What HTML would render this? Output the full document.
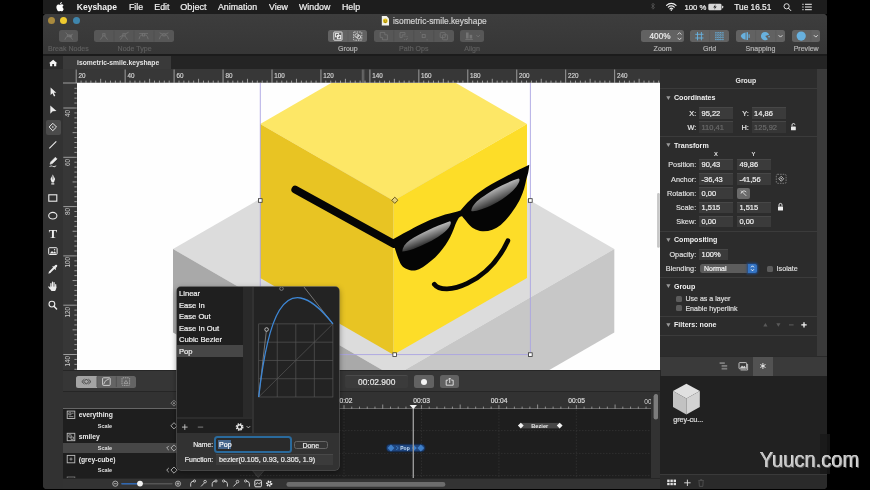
<!DOCTYPE html>
<html lang="en"><head><meta charset="utf-8"><title>Keyshape</title>
<style>
html,body{margin:0;padding:0;background:#000;}
body{width:870px;height:490px;position:relative;will-change:transform;overflow:hidden;font-family:"Liberation Sans",sans-serif;}
body div,body svg{position:absolute;}
.t,.u{white-space:nowrap;}
</style></head><body>

<div style="left:43.2px;top:0.0px;width:783.6px;height:13.6px;background:#1d1d1d;"></div>
<svg style="left:55px;top:0px;" width="11" height="13" viewBox="55 0 11 13"><path fill="#fff" d="M61.9 3.6c.5-.6.8-1.300.7-2.000-.7.100-1.400.500-1.900 1.100-.4.500-.8 1.300-.7 2.000.8 0 1.500-.5 1.900-1.100zM62.600 4.800c-1.000-.100-1.900.600-2.400.600-.500 0-1.300-.600-2.100-.500-1.100 0-2.100.600-2.600 1.600-1.100 1.900-.300 4.800.800 6.400.500.800 1.200 1.600 2.000 1.600.800 0 1.100-.5 2.100-.5s1.200.5 2.100.5 1.400-.8 1.900-1.600c.6-.900.900-1.800.900-1.800s-1.700-.700-1.700-2.600c0-1.700 1.300-2.400 1.400-2.500-.8-1.100-2.000-1.200-2.400-1.200z" transform="translate(60 6.400) scale(.72) translate(-60 -7.7)"/></svg>
<div class="t" style="top:2.03px;font-size:8.5px;line-height:11.1px;color:#f2f2f2;font-weight:bold;left:76.8px;">Keyshape</div>
<div class="t" style="top:2.03px;font-size:8.8px;line-height:11.4px;color:#f2f2f2;-webkit-text-stroke:.2px;left:129.0px;">File</div>
<div class="t" style="top:2.03px;font-size:8.8px;line-height:11.4px;color:#f2f2f2;-webkit-text-stroke:.2px;left:154.3px;">Edit</div>
<div class="t" style="top:2.02px;font-size:9.1px;line-height:11.8px;color:#f2f2f2;-webkit-text-stroke:.2px;left:180.3px;">Object</div>
<div class="t" style="top:2.03px;font-size:8.8px;line-height:11.4px;color:#f2f2f2;-webkit-text-stroke:.2px;left:218.0px;">Animation</div>
<div class="t" style="top:2.03px;font-size:8.8px;line-height:11.4px;color:#f2f2f2;-webkit-text-stroke:.2px;left:269.0px;">View</div>
<div class="t" style="top:2.03px;font-size:8.8px;line-height:11.4px;color:#f2f2f2;-webkit-text-stroke:.2px;left:299.0px;">Window</div>
<div class="t" style="top:2.03px;font-size:8.8px;line-height:11.4px;color:#f2f2f2;-webkit-text-stroke:.2px;left:342.0px;">Help</div>
<div class="t" style="top:3.03px;font-size:7.7px;line-height:10.0px;color:#f2f2f2;-webkit-text-stroke:.2px;left:684.5px;">100 %</div>
<div class="t" style="top:2.02px;font-size:8.3px;line-height:10.8px;color:#f2f2f2;-webkit-text-stroke:.2px;left:734.3px;">Tue 16.51</div>
<svg style="left:645px;top:0px;" width="181" height="14" viewBox="645 0 181 14">
<path d="M651.3 4.600l3.200 3.000-1.600 1.600v-6.000l1.600 1.600-3.200 3.000" fill="none" stroke="#555" stroke-width=".8"/>
<g fill="none" stroke="#f2f2f2" stroke-width="1.150" stroke-linecap="round">
<path d="M666.6 5.300a6.600 6.600 0 0 1 9.400 0"/><path d="M668.3 7.100a4.200 4.200 0 0 1 6.000 0"/><path d="M669.900 8.800a2.000 2.000 0 0 1 2.800 0"/></g>
<circle cx="671.3" cy="10.100" r=".8" fill="#f2f2f2"/>
<rect x="708.300" y="3.800" width="13.200" height="6.400" rx="1.300" fill="#d8d8d8"/><rect x="722.000" y="5.700" width="1.200" height="2.600" rx=".5" fill="#d8d8d8"/>
<path d="M715.600 4.300l-2.400 3.100h1.700l-.7 2.300 2.500-3.200h-1.700z" fill="#222"/>
<circle cx="786.600" cy="6.300" r="2.600" fill="none" stroke="#f2f2f2" stroke-width=".9"/><path d="M788.600 8.300l2.200 2.300" stroke="#f2f2f2" stroke-width="1.000" stroke-linecap="round"/>
<g stroke="#f2f2f2" stroke-width="1.000"><path d="M802.300 4.300h1.300M805.000 4.300h6.800M802.300 7.000h1.300M805.000 7.000h6.800M802.300 9.700h1.300M805.000 9.700h6.800"/></g>
</svg>
<div style="left:43.2px;top:14.3px;width:783.6px;height:474.3px;background:#383838;border-radius:4px 4px 4px 4px;"></div>
<div style="left:43.2px;top:14.3px;width:783.6px;height:39.9px;background:linear-gradient(#3d3d3d,#363636);border-radius:4px 4px 0 0;"></div>
<div style="left:43.2px;top:54.2px;width:783.6px;height:1.5px;background:#1b1b1b;"></div>
<div style="left:47.8px;top:17.2px;width:7.2px;height:7.2px;background:#a98a3e;border-radius:50%;"></div>
<div style="left:60.3px;top:17.2px;width:7.2px;height:7.2px;background:#efca2f;border-radius:50%;"></div>
<div style="left:72.5px;top:17.2px;width:7.2px;height:7.2px;background:#3f86ad;border-radius:50%;"></div>
<svg style="left:381px;top:15px;" width="9" height="12" viewBox="381 15 9 12"><path d="M381.800 16.000h4.800l2.400 2.400v7.100h-7.200z" fill="#f2f2ec"/><circle cx="385.300" cy="20.900" r="2.400" fill="#e8c61f"/><path d="M384.300 20.400v.8M386.300 20.400v.8M384.200 21.900q1.100 1.000 2.200 0" stroke="#3a3000" stroke-width=".6" fill="none"/></svg>
<div class="t" style="top:16.02px;font-size:8.35px;line-height:10.9px;color:#cfcfcf;-webkit-text-stroke:.2px;left:393.0px;">isometric-smile.keyshape</div>
<div style="left:59.0px;top:29.7px;width:19.0px;height:12.8px;background:#575757;border-radius:2.500px;"></div>
<div class="t" style="top:44.03px;font-size:7.05px;line-height:9.2px;color:#5e5e5e;-webkit-text-stroke:.2px;left:-31.6px;width:200px;text-align:center;">Break Nodes</div>
<div style="left:94.0px;top:29.7px;width:80.0px;height:12.8px;background:#575757;border-radius:2.500px;"></div>
<div class="t" style="top:44.03px;font-size:7.05px;line-height:9.2px;color:#5e5e5e;-webkit-text-stroke:.2px;left:34.6px;width:200px;text-align:center;">Node Type</div>
<div style="left:328.3px;top:29.7px;width:39.2px;height:12.8px;background:#626262;border-radius:2.500px;"></div>
<div class="t" style="top:44.03px;font-size:7.05px;line-height:9.2px;color:#b4b4b4;-webkit-text-stroke:.2px;left:247.9px;width:200px;text-align:center;">Group</div>
<div style="left:373.8px;top:29.7px;width:79.9px;height:12.8px;background:#575757;border-radius:2.500px;"></div>
<div class="t" style="top:44.03px;font-size:7.05px;line-height:9.2px;color:#5e5e5e;-webkit-text-stroke:.2px;left:313.8px;width:200px;text-align:center;">Path Ops</div>
<div style="left:460.3px;top:29.7px;width:23.7px;height:12.8px;background:#575757;border-radius:2.500px;"></div>
<div class="t" style="top:44.03px;font-size:7.05px;line-height:9.2px;color:#5e5e5e;-webkit-text-stroke:.2px;left:372.1px;width:200px;text-align:center;">Align</div>
<div style="left:640.7px;top:29.7px;width:43.8px;height:12.8px;background:#626262;border-radius:2.500px;"></div>
<div class="t" style="top:44.03px;font-size:7.05px;line-height:9.2px;color:#b4b4b4;-webkit-text-stroke:.2px;left:562.6px;width:200px;text-align:center;">Zoom</div>
<div style="left:690.0px;top:29.7px;width:39.2px;height:12.8px;background:#626262;border-radius:2.500px;"></div>
<div class="t" style="top:44.03px;font-size:7.05px;line-height:9.2px;color:#b4b4b4;-webkit-text-stroke:.2px;left:609.6px;width:200px;text-align:center;">Grid</div>
<div style="left:735.8px;top:29.7px;width:49.3px;height:12.8px;background:#626262;border-radius:2.500px;"></div>
<div class="t" style="top:44.03px;font-size:7.05px;line-height:9.2px;color:#b4b4b4;-webkit-text-stroke:.2px;left:660.5px;width:200px;text-align:center;">Snapping</div>
<div style="left:791.9px;top:29.7px;width:28.6px;height:12.8px;background:#626262;border-radius:2.500px;"></div>
<div class="t" style="top:44.03px;font-size:7.05px;line-height:9.2px;color:#b4b4b4;-webkit-text-stroke:.2px;left:706.2px;width:200px;text-align:center;">Preview</div>
<div class="t" style="top:32.03px;font-size:8.2px;line-height:10.7px;color:#ececec;-webkit-text-stroke:.2px;right:199.5px;">400%</div>
<svg style="left:43px;top:28px;" width="784" height="16" viewBox="43 28 784 16"><g fill="none" stroke="#747474" stroke-width=".85"><path d="M64.800 39.800q1.000-3.200 3.400-4.000M72.600 39.600q-1.800-2.000-2.400-3.600M68.200 35.800q-.8-2.000-2.600-3.200M70.200 36.000q1.400-1.600 2.600-1.800"/><rect x="67.300" y="34.900" width="1.800" height="1.800"/><rect x="69.600" y="35.100" width="1.800" height="1.800"/></g><g fill="none" stroke="#747474" stroke-width=".85"><path d="M100.3 39.600L103.9 34.800L107.5 39.600"/><rect x="102.8" y="33.700" width="2.200" height="2.200" fill="#575757"/></g><g fill="none" stroke="#747474" stroke-width=".85"><path d="M120.4 39.600L124.0 34.800L127.6 39.600M119.4 37.200L128.6 32.200"/><rect x="122.9" y="33.700" width="2.200" height="2.200" fill="#575757"/></g><g fill="none" stroke="#747474" stroke-width=".85"><path d="M139.0 39.200Q140.4 33.200 143.6 35.600Q146.8 33.200 148.2 39.200M139.2 33.600L148.0 33.600"/><rect x="142.5" y="33.700" width="2.200" height="2.200" fill="#575757"/></g><g fill="none" stroke="#747474" stroke-width=".85"><path d="M159.4 39.200Q160.8 33.200 164.0 35.600Q167.2 33.200 168.6 39.200M159.6 32.800L164.0 35.000L168.4 32.800"/><rect x="162.9" y="33.700" width="2.200" height="2.200" fill="#575757"/></g><path d="M114 30.500v11.200" stroke="#4b4b4b" stroke-width=".6"/><path d="M134 30.500v11.200" stroke="#4b4b4b" stroke-width=".6"/><path d="M154 30.500v11.200" stroke="#4b4b4b" stroke-width=".6"/><g fill="none" stroke="#f0f0f0" stroke-width=".9"><rect x="333.800" y="32.000" width="8.200" height="8.200" rx=".6"/><rect x="335.500" y="33.600" width="3.200" height="3.200"/><rect x="337.400" y="35.500" width="3.200" height="3.200"/></g><g fill="none" stroke="#d8d8d8" stroke-width=".9"><rect x="353.600" y="32.000" width="8.200" height="8.200" rx=".6" stroke-dasharray="1.500 1.000"/><circle cx="356.800" cy="35.600" r="1.900"/><circle cx="358.800" cy="37.000" r="1.900"/></g><path d="M348.000 30.500v11.200" stroke="#585858" stroke-width=".6"/><g fill="none" stroke="#747474" stroke-width=".85"><path d="M380.200 32.400h4.600v2.400h2.600v5.000h-5.000v-2.400h-2.200z"/></g><g fill="none" stroke="#747474" stroke-width=".85"><path d="M400.000 32.600h5.000v2.200h-2.800v2.800h-2.200z"/><path d="M403.600 36.200h3.600v3.400h-3.600" stroke-dasharray="1.000 .8"/></g><g fill="none" stroke="#747474" stroke-width=".85"><rect x="422.200" y="34.600" width="3.000" height="3.000"/><path d="M420.000 32.400h1.000M426.600 39.800h1.000" /></g><g fill="none" stroke="#747474" stroke-width=".85"><rect x="440.200" y="32.600" width="5.000" height="5.000" rx=".6"/><rect x="442.600" y="34.800" width="5.000" height="5.000" rx=".6"/></g><path d="M393.8 30.500v11.200" stroke="#4b4b4b" stroke-width=".6"/><path d="M413.8 30.500v11.200" stroke="#4b4b4b" stroke-width=".6"/><path d="M433.8 30.500v11.200" stroke="#4b4b4b" stroke-width=".6"/><g fill="#747474"><rect x="466.000" y="32.500" width="2.600" height="6.000"/><rect x="469.600" y="34.800" width="2.600" height="3.700"/><rect x="465.300" y="39.200" width="7.600" height=".8"/></g><path d="M476.500 35.200l1.700 1.700 1.700-1.700" fill="none" stroke="#747474" stroke-width=".9"/><path d="M677.600 34.600l1.900-2.000 1.900 2.000M677.600 37.800l1.900 2.000 1.900-2.000" fill="none" stroke="#d0d0d0" stroke-width="1.000"/><g stroke="#68b1df" stroke-width=".9" fill="none"><path d="M697.500 32.000v8.300M701.400 32.000v8.300M695.300 34.300h8.200M695.300 38.000h8.200"/></g><g stroke="#68b1df" stroke-width=".9" fill="none" stroke-dasharray="1.000 .8"><path d="M716.000 32.000v8.500M718.300 32.000v8.500M720.600 32.000v8.500M722.900 32.000v8.500M715.300 33.000h8.500M715.300 35.200h8.500M715.300 37.400h8.500M715.300 39.600h8.500"/></g><path d="M709.600 30.500v11.200" stroke="#585858" stroke-width=".6"/><g fill="#68b1df"><path d="M740.700 36.100q1.000-3.000 4.900-3.600v7.200q-3.900-.6-4.900-3.600z"/><rect x="746.500" y="32.200" width="1.500" height="7.800"/><rect x="748.600" y="34.300" width="1.100" height="3.600"/></g><g fill="#68b1df"><path d="M765.200 36.100L769.150 34.660A4.200 4.200 0 1 0 767.900 39.320z"/><rect x="768.300" y="35.900" width="1.500" height="1.500"/></g><path d="M755.600 30.500v11.200M775.800 30.500v11.200" stroke="#585858" stroke-width=".6"/><path d="M778.600 35.200l1.900 1.900 1.900-1.900" fill="none" stroke="#d8d8d8" stroke-width="1.000"/><circle cx="801.200" cy="36.100" r="4.600" fill="#68b1df"/><path d="M810.800 30.500v11.200" stroke="#585858" stroke-width=".6"/><path d="M813.900 35.200l1.900 1.900 1.900-1.900" fill="none" stroke="#d8d8d8" stroke-width="1.000"/></svg>
<div style="left:43.2px;top:55.7px;width:783.6px;height:13.5px;background:#242424;"></div>
<div style="left:43.2px;top:55.7px;width:19.5px;height:13.5px;background:#2b2b2b;"></div>
<div style="left:63.3px;top:55.7px;width:108.2px;height:13.5px;background:#3a3a3a;"></div>
<svg style="left:48px;top:58px;" width="11" height="10" viewBox="48 58 11 10"><path d="M53.150 59.800l-4.200 3.500h1.100v3.000h2.200v-2.200h1.800v2.200h2.200v-3.000h1.100z" fill="#f4f4f4"/></svg>
<div class="t" style="top:59.02px;font-size:6.75px;line-height:8.8px;color:#e4e4e4;font-weight:bold;left:77.0px;">isometric-smile.keyshape</div>
<div style="left:43.2px;top:69.2px;width:19.8px;height:419.4px;background:#323232;border-radius:0 0 0 4px;"></div>
<div style="left:45.7px;top:119.5px;width:15.2px;height:15.3px;background:#4b4b4b;border-radius:2px;"></div>
<svg style="left:44px;top:84px;" width="19" height="228" viewBox="44 84 19 228">
<path d="M50.600 87.400v7.600l1.900-1.700 1.500 3.100 1.300-.6-1.500-3.000h2.500z" fill="#ececec"/>
<path d="M50.300 105.400V113.700L52.700 111.300L56.500 111.000z" fill="#ececec"/>
<path d="M52.800 123.300l3.700 3.700-3.700 3.700-3.700-3.700z" fill="none" stroke="#ececec" stroke-width="1.000"/><circle cx="52.800" cy="127.000" r=".8" fill="#ececec"/>
<path d="M49.300 148.300l7.000-7.000" stroke="#ececec" stroke-width="1.100"/>
<path d="M50.000 164.300l.700-2.400 4.700-4.700 1.700 1.700-4.700 4.700zM49.300 166.600q2.000-1.600 3.500-.3t3.500-.5" fill="#ececec" stroke="#ececec" stroke-width=".5"/>
<path d="M52.800 174.600l2.300 4.500-1.200 3.300h-2.200l-1.200-3.300zM51.300 183.300h3.000v1.300h-3.000z" fill="#ececec"/><path d="M52.800 175.500v4.000" stroke="#323232" stroke-width=".6"/>
<rect x="48.800" y="194.800" width="8.000" height="6.400" fill="none" stroke="#ececec" stroke-width="1.100"/>
<ellipse cx="52.800" cy="215.700" rx="4.100" ry="3.300" fill="none" stroke="#ececec" stroke-width="1.100"/>
<rect x="48.700" y="247.700" width="8.400" height="6.800" rx=".8" fill="none" stroke="#ececec" stroke-width="1.000"/><path d="M49.700 253.600l2.300-2.700 1.500 1.500 1.300-1.100 1.600 2.300z" fill="#ececec"/><circle cx="54.600" cy="249.800" r=".7" fill="#ececec"/>
<path d="M49.600 272.300l4.300-4.300" stroke="#ececec" stroke-width="1.900" stroke-linecap="round"/><path d="M53.000 266.600l2.400 2.400" stroke="#ececec" stroke-width="1.200" stroke-linecap="round"/><path d="M54.600 267.400l1.500-1.500" stroke="#ececec" stroke-width="2.300" stroke-linecap="round"/><path d="M49.000 273.300l.9-.9" stroke="#ececec" stroke-width=".8" stroke-linecap="round"/>
<g stroke="#ececec" stroke-width="1.200" stroke-linecap="round" fill="none"><path d="M50.900 287.000v-3.300M52.500 286.400v-4.400M54.100 286.600v-3.900M55.700 287.400v-2.700M50.200 288.600l-1.400-1.700"/></g><path d="M50.300 286.500h6.000v1.600q-.2 1.800-1.200 2.800h-3.600q-1.200-1.600-2.600-3.700l1.400.2z" fill="#ececec"/>
<circle cx="51.900" cy="304.100" r="2.900" fill="none" stroke="#ececec" stroke-width="1.100"/><path d="M54.000 306.300l2.600 2.700" stroke="#ececec" stroke-width="1.400" stroke-linecap="round"/>
</svg>
<div class="t" style="top:226.02px;font-size:12.6px;line-height:16.4px;color:#ececec;font-weight:bold;left:-47.1px;width:200px;text-align:center;font-family:'Liberation Serif',serif;">T</div>
<div style="left:63.0px;top:69.2px;width:597.4px;height:14.2px;background:#373737;"></div>
<div style="left:63.0px;top:83.4px;width:13.9px;height:286.8px;background:#373737;"></div>
<svg style="left:63px;top:69px;" width="598" height="302" viewBox="63 69 598 302"><path d="M63.000 83.000h597.400" stroke="#b8b8b8" stroke-width=".8"/><path d="M76.20 69.500v13.500M81.09 80.600v2.400M85.99 80.600v2.400M90.89 80.600v2.400M95.78 80.600v2.400M100.67 78.800v4.200M105.57 80.600v2.400M110.47 80.600v2.400M115.36 80.600v2.400M120.25 80.600v2.400M125.15 69.500v13.500M130.05 80.600v2.400M134.94 80.600v2.400M139.83 80.600v2.400M144.73 80.600v2.400M149.62 78.800v4.200M154.52 80.600v2.400M159.41 80.600v2.400M164.31 80.600v2.400M169.20 80.600v2.400M174.10 69.500v13.500M179.00 80.600v2.400M183.89 80.600v2.400M188.78 80.600v2.400M193.68 80.600v2.400M198.57 78.800v4.200M203.47 80.600v2.400M208.37 80.600v2.400M213.26 80.600v2.400M218.15 80.600v2.400M223.05 69.500v13.500M227.94 80.600v2.400M232.84 80.600v2.400M237.74 80.600v2.400M242.63 80.600v2.400M247.52 78.800v4.200M252.42 80.600v2.400M257.31 80.600v2.400M262.21 80.600v2.400M267.10 80.600v2.400M272.00 69.500v13.500M276.89 80.600v2.400M281.79 80.600v2.400M286.69 80.600v2.400M291.58 80.600v2.400M296.47 78.800v4.200M301.37 80.600v2.400M306.26 80.600v2.400M311.16 80.600v2.400M316.06 80.600v2.400M320.95 69.500v13.500M325.84 80.600v2.400M330.74 80.600v2.400M335.63 80.600v2.400M340.53 80.600v2.400M345.42 78.800v4.200M350.32 80.600v2.400M355.21 80.600v2.400M360.11 80.600v2.400M365.00 80.600v2.400M369.90 69.500v13.500M374.79 80.600v2.400M379.69 80.600v2.400M384.58 80.600v2.400M389.48 80.600v2.400M394.37 78.800v4.200M399.27 80.600v2.400M404.16 80.600v2.400M409.06 80.600v2.400M413.95 80.600v2.400M418.85 69.500v13.500M423.74 80.600v2.400M428.64 80.600v2.400M433.53 80.600v2.400M438.43 80.600v2.400M443.32 78.800v4.200M448.22 80.600v2.400M453.11 80.600v2.400M458.01 80.600v2.400M462.90 80.600v2.400M467.80 69.500v13.500M472.69 80.600v2.400M477.59 80.600v2.400M482.48 80.600v2.400M487.38 80.600v2.400M492.27 78.800v4.200M497.17 80.600v2.400M502.06 80.600v2.400M506.96 80.600v2.400M511.85 80.600v2.400M516.75 69.500v13.500M521.64 80.600v2.400M526.54 80.600v2.400M531.43 80.600v2.400M536.33 80.600v2.400M541.23 78.800v4.200M546.12 80.600v2.400M551.01 80.600v2.400M555.91 80.600v2.400M560.80 80.600v2.400M565.70 69.500v13.500M570.60 80.600v2.400M575.49 80.600v2.400M580.38 80.600v2.400M585.28 80.600v2.400M590.17 78.800v4.200M595.07 80.600v2.400M599.97 80.600v2.400M604.86 80.600v2.400M609.75 80.600v2.400M614.65 69.500v13.500M619.54 80.600v2.400M624.44 80.600v2.400M629.34 80.600v2.400M634.23 80.600v2.400M639.12 78.800v4.200M644.02 80.600v2.400M648.91 80.600v2.400M653.81 80.600v2.400M658.71 80.600v2.400" stroke="#b8b8b8" stroke-width=".8" fill="none"/><path d="M362.300 69.500v13.500M363.800 69.500v13.500" stroke="#8a8a8a" stroke-width=".7"/><path d="M74.400 88.28h2.400M74.400 93.21h2.400M74.400 98.14h2.400M74.400 103.07h2.400M63.300 108.00h13.500M74.400 112.93h2.400M74.400 117.86h2.400M74.400 122.79h2.400M74.400 127.72h2.400M72.600 132.65h4.200M74.400 137.58h2.400M74.400 142.51h2.400M74.400 147.44h2.400M74.400 152.37h2.400M63.300 157.30h13.500M74.400 162.23h2.400M74.400 167.16h2.400M74.400 172.09h2.400M74.400 177.02h2.400M72.600 181.95h4.200M74.400 186.88h2.400M74.400 191.81h2.400M74.400 196.74h2.400M74.400 201.67h2.400M63.300 206.60h13.500M74.400 211.53h2.400M74.400 216.46h2.400M74.400 221.39h2.400M74.400 226.32h2.400M72.600 231.25h4.200M74.400 236.18h2.400M74.400 241.11h2.400M74.400 246.04h2.400M74.400 250.97h2.400M63.300 255.90h13.500M74.400 260.83h2.400M74.400 265.76h2.400M74.400 270.69h2.400M74.400 275.62h2.400M72.600 280.55h4.200M74.400 285.48h2.400M74.400 290.41h2.400M74.400 295.34h2.400M74.400 300.27h2.400M63.300 305.20h13.500M74.400 310.13h2.400M74.400 315.06h2.400M74.400 319.99h2.400M74.400 324.92h2.400M72.600 329.85h4.200M74.400 334.78h2.400M74.400 339.71h2.400M74.400 344.64h2.400M74.400 349.57h2.400M63.300 354.50h13.500M74.400 359.43h2.400M74.400 364.36h2.400M74.400 369.29h2.400" stroke="#b8b8b8" stroke-width=".8" fill="none"/></svg>
<div class="t" style="top:72.03px;font-size:6.3px;line-height:8.2px;color:#cfcfcf;-webkit-text-stroke:.2px;left:78.5px;">20</div>
<div class="t" style="top:72.03px;font-size:6.3px;line-height:8.2px;color:#cfcfcf;-webkit-text-stroke:.2px;left:127.5px;">40</div>
<div class="t" style="top:72.03px;font-size:6.3px;line-height:8.2px;color:#cfcfcf;-webkit-text-stroke:.2px;left:176.4px;">60</div>
<div class="t" style="top:72.03px;font-size:6.3px;line-height:8.2px;color:#cfcfcf;-webkit-text-stroke:.2px;left:225.4px;">80</div>
<div class="t" style="top:72.03px;font-size:6.3px;line-height:8.2px;color:#cfcfcf;-webkit-text-stroke:.2px;left:274.3px;">100</div>
<div class="t" style="top:72.03px;font-size:6.3px;line-height:8.2px;color:#cfcfcf;-webkit-text-stroke:.2px;left:323.2px;">120</div>
<div class="t" style="top:72.03px;font-size:6.3px;line-height:8.2px;color:#cfcfcf;-webkit-text-stroke:.2px;left:372.2px;">140</div>
<div class="t" style="top:72.03px;font-size:6.3px;line-height:8.2px;color:#cfcfcf;-webkit-text-stroke:.2px;left:421.1px;">160</div>
<div class="t" style="top:72.03px;font-size:6.3px;line-height:8.2px;color:#cfcfcf;-webkit-text-stroke:.2px;left:470.1px;">180</div>
<div class="t" style="top:72.03px;font-size:6.3px;line-height:8.2px;color:#cfcfcf;-webkit-text-stroke:.2px;left:519.0px;">200</div>
<div class="t" style="top:72.03px;font-size:6.3px;line-height:8.2px;color:#cfcfcf;-webkit-text-stroke:.2px;left:568.0px;">220</div>
<div class="t" style="top:72.03px;font-size:6.3px;line-height:8.2px;color:#cfcfcf;-webkit-text-stroke:.2px;left:616.9px;">240</div>
<div class="u" style="left:64.000px;top:109.5px;width:8px;height:14px;font-size:6.300px;color:#cfcfcf;"><div class="u" style="left:0;top:0;transform-origin:0 0;transform:rotate(-90deg) translate(-100%,0);line-height:8px;">40</div></div>
<div class="u" style="left:64.000px;top:158.8px;width:8px;height:14px;font-size:6.300px;color:#cfcfcf;"><div class="u" style="left:0;top:0;transform-origin:0 0;transform:rotate(-90deg) translate(-100%,0);line-height:8px;">60</div></div>
<div class="u" style="left:64.000px;top:208.1px;width:8px;height:14px;font-size:6.300px;color:#cfcfcf;"><div class="u" style="left:0;top:0;transform-origin:0 0;transform:rotate(-90deg) translate(-100%,0);line-height:8px;">80</div></div>
<div class="u" style="left:64.000px;top:257.4px;width:8px;height:14px;font-size:6.300px;color:#cfcfcf;"><div class="u" style="left:0;top:0;transform-origin:0 0;transform:rotate(-90deg) translate(-100%,0);line-height:8px;">100</div></div>
<div class="u" style="left:64.000px;top:306.7px;width:8px;height:14px;font-size:6.300px;color:#cfcfcf;"><div class="u" style="left:0;top:0;transform-origin:0 0;transform:rotate(-90deg) translate(-100%,0);line-height:8px;">120</div></div>
<div class="u" style="left:64.000px;top:356.0px;width:8px;height:14px;font-size:6.300px;color:#cfcfcf;"><div class="u" style="left:0;top:0;transform-origin:0 0;transform:rotate(-90deg) translate(-100%,0);line-height:8px;">140</div></div>
<svg style="left:77px;top:83px" width="583.4" height="287.2" viewBox="77 83 583.4 287.2">
<defs>
<linearGradient id="gl1" gradientUnits="userSpaceOnUse" x1="424" y1="231" x2="430" y2="247"><stop offset="0" stop-color="#fff" stop-opacity=".72"/><stop offset="1" stop-color="#fff" stop-opacity="0"/></linearGradient>
<linearGradient id="gl2" gradientUnits="userSpaceOnUse" x1="493" y1="189" x2="501" y2="207"><stop offset="0" stop-color="#fff" stop-opacity=".72"/><stop offset="1" stop-color="#fff" stop-opacity="0"/></linearGradient>
</defs>
<rect x="70" y="80" width="600" height="300" fill="#fefefe"/>
<path d="M173 249L393.500 122L614.300 249L393.500 376.500z" fill="#dcdcdc"/>
<path d="M173 249L393.500 376.500V460H173z" fill="#a9a9a9"/>
<path d="M173 332.500L393.500 460H173z" fill="#fefefe"/>
<path d="M393.500 376.500L614.300 249V332.500L393.500 460z" fill="#c7c7c7"/>
<path d="M260.200 124L393.500 47L527 124L393.500 200.800z" fill="#fde766"/>
<path d="M260.200 124L393.500 200.800V354.800L260.200 278z" fill="#e8c423"/>
<path d="M393.500 200.800L527 124V278L393.500 354.800z" fill="#fddd28"/>
<path d="M295.300 189.700L394 244" stroke="#050505" stroke-width="7.800" stroke-linecap="round"/>
<path d="M390.700 240.500C398 236.500 408 231 416.800 226.300C424 222.500 430 220 435.100 218C442 215.300 449 213.500 453.500 212.500C456.500 211.800 458.500 211.300 460.500 210.600C466 204 474 195 486 187.500C498 180.500 515 171.500 529.300 164.800C528.800 171 527.800 175 526.400 178.900C525 186 523.500 191.500 520.900 197.300C518.800 202 516.500 206 513.500 210.100C510 215.500 505.500 220.500 500.700 224.900C495 229.500 488.500 231.700 482.300 231.300C476 230.500 471 227.500 467.600 223C465.500 220.500 463.500 218 462.100 216.300C460.800 216 459.300 217 458.100 218.900C457 221 456.200 222.500 455.400 224.400C453.500 230 451 236 448 241C444.500 247 440 252.500 435.100 257.500C430 262 424.500 266.500 419 269.300C416 270.600 413.500 270.900 411.300 270.400C408.500 270 406 269 403.900 267.600C402 266 401 264.500 400.200 263C397.500 257 395.500 251 393.800 244.600z" fill="#050505"/>
<path d="M402.300 251.500C402.500 247.500 405 243.500 410 240C420 233.500 436 226 449.900 221.200C451.500 221.500 451 224.500 448.500 228C445 232.500 438 237.500 428 242.500C418 247.500 408 251.500 402.300 251.500z" fill="url(#gl1)"/>
<path d="M471.300 211C471.500 207 475 202.500 481 198C491 190.500 506 182.500 518.500 178.500C520.500 179 519.500 182.500 516.500 186.500C512 192.500 503 199.500 493 204.500C484 209 475 212 471.300 211z" fill="url(#gl2)"/>
<path d="M434.300 284.300C444 297 488 284 507.900 240.700" fill="none" stroke="#050505" stroke-width="4.700" stroke-linecap="round"/>
<g stroke="#aaa4e2" stroke-width=".9" fill="none"><path d="M260.300 83V354.600H530.400V83"/></g>
<g fill="#fff" stroke="#333" stroke-width=".8">
<rect x="258.500" y="198.700" width="3.600" height="3.600"/><rect x="528.600" y="198.700" width="3.600" height="3.600"/>
<rect x="392.900" y="352.800" width="3.600" height="3.600"/><rect x="528.600" y="352.800" width="3.600" height="3.600"/>
</g>
<path d="M394.800 197.200l3.100 3.100-3.100 3.100-3.100-3.100z" fill="#e6d27a" stroke="#5a4a10" stroke-width=".9"/>
<rect x="657.100" y="193" width="2.700" height="54.700" rx="1.300" fill="#c6c6c6"/>
</svg>
<div style="left:660.2px;top:69.2px;width:0.6px;height:14.2px;background:#444;"></div>
<div style="left:660.4px;top:69.2px;width:166.4px;height:307.8px;background:#3a3a3a;"></div>
<div style="left:660.4px;top:69.2px;width:156.8px;height:287.1px;background:#2c2c2c;"></div>
<div style="left:660.4px;top:88.1px;width:156.8px;height:1.0px;background:#3b3b3b;"></div>
<div style="left:660.4px;top:136.0px;width:156.8px;height:1.0px;background:#3b3b3b;"></div>
<div style="left:660.4px;top:231.1px;width:156.8px;height:1.0px;background:#3b3b3b;"></div>
<div style="left:660.4px;top:277.3px;width:156.8px;height:1.0px;background:#3b3b3b;"></div>
<div style="left:660.4px;top:315.7px;width:156.8px;height:1.0px;background:#3b3b3b;"></div>
<div style="left:660.4px;top:334.8px;width:156.8px;height:1.0px;background:#3b3b3b;"></div>
<div class="t" style="top:76.02px;font-size:6.9px;line-height:9.0px;color:#e6e6e6;font-weight:bold;left:645.9px;width:200px;text-align:center;">Group</div>
<svg style="left:665px;top:93.5px" width="7" height="8" viewBox="0 0 7 8"><path d="M1.300 2.300h4.200l-2.100 3.600z" fill="#9a9a9a"/></svg>
<div class="t" style="top:94.03px;font-size:7.1px;line-height:9.2px;color:#f0f0f0;font-weight:bold;left:674.0px;">Coordinates</div>
<div class="t" style="top:109.03px;font-size:7.3px;line-height:9.5px;color:#e8e8e8;-webkit-text-stroke:.2px;right:173.8px;">X:</div>
<div style="left:698.9px;top:107.1px;width:33.9px;height:11.6px;background:#3b3b3b;border-top:.6px solid #474747;box-sizing:border-box;"></div>
<div class="t" style="top:109.03px;font-size:7.5px;line-height:9.8px;color:#f0f0f0;-webkit-text-stroke:.2px;left:701.5px;">95,22</div>
<div class="t" style="top:109.03px;font-size:7.3px;line-height:9.5px;color:#e8e8e8;-webkit-text-stroke:.2px;right:121.2px;">Y:</div>
<div style="left:751.5px;top:107.1px;width:34.5px;height:11.6px;background:#3b3b3b;border-top:.6px solid #474747;box-sizing:border-box;"></div>
<div class="t" style="top:109.03px;font-size:7.5px;line-height:9.8px;color:#f0f0f0;-webkit-text-stroke:.2px;left:754.1px;">14,86</div>
<div class="t" style="top:123.02px;font-size:7.3px;line-height:9.5px;color:#e8e8e8;-webkit-text-stroke:.2px;right:173.8px;">W:</div>
<div style="left:698.9px;top:121.2px;width:33.9px;height:11.6px;background:#363636;border-top:.6px solid #474747;box-sizing:border-box;"></div>
<div class="t" style="top:123.02px;font-size:7.5px;line-height:9.8px;color:#6a6a6a;-webkit-text-stroke:.2px;left:701.5px;">110,41</div>
<div class="t" style="top:123.02px;font-size:7.3px;line-height:9.5px;color:#e8e8e8;-webkit-text-stroke:.2px;right:121.2px;">H:</div>
<div style="left:751.5px;top:121.2px;width:34.5px;height:11.6px;background:#363636;border-top:.6px solid #474747;box-sizing:border-box;"></div>
<div class="t" style="top:123.02px;font-size:7.5px;line-height:9.8px;color:#6a6a6a;-webkit-text-stroke:.2px;left:754.1px;">125,92</div>
<svg style="left:789px;top:121px;" width="9" height="12" viewBox="789 121 9 12"><rect x="791.000" y="126.400" width="4.800" height="3.900" rx=".6" fill="#e8e8e8"/><path d="M792.000 126.400v-1.300a1.450 1.450 0 0 1 2.900-.3" fill="none" stroke="#e8e8e8" stroke-width=".9"/></svg>
<svg style="left:665px;top:141.3px" width="7" height="8" viewBox="0 0 7 8"><path d="M1.300 2.300h4.200l-2.100 3.600z" fill="#9a9a9a"/></svg>
<div class="t" style="top:142.03px;font-size:7.1px;line-height:9.2px;color:#f0f0f0;font-weight:bold;left:674.0px;">Transform</div>
<div class="t" style="top:151.02px;font-size:5.8px;line-height:7.5px;color:#e0e0e0;font-weight:bold;left:616.0px;width:200px;text-align:center;">X</div>
<div class="t" style="top:151.02px;font-size:5.8px;line-height:7.5px;color:#e0e0e0;font-weight:bold;left:653.5px;width:200px;text-align:center;">Y</div>
<div class="t" style="top:160.03px;font-size:7.3px;line-height:9.5px;color:#dedede;-webkit-text-stroke:.2px;right:173.8px;">Position:</div>
<div style="left:698.9px;top:158.8px;width:33.9px;height:11.6px;background:#3b3b3b;border-top:.6px solid #474747;box-sizing:border-box;"></div>
<div class="t" style="top:160.03px;font-size:7.5px;line-height:9.8px;color:#f0f0f0;-webkit-text-stroke:.2px;left:701.5px;">90,43</div>
<div style="left:736.8px;top:158.8px;width:34.2px;height:11.6px;background:#3b3b3b;border-top:.6px solid #474747;box-sizing:border-box;"></div>
<div class="t" style="top:160.03px;font-size:7.5px;line-height:9.8px;color:#f0f0f0;-webkit-text-stroke:.2px;left:739.4px;">49,86</div>
<div class="t" style="top:175.02px;font-size:7.3px;line-height:9.5px;color:#dedede;-webkit-text-stroke:.2px;right:173.8px;">Anchor:</div>
<div style="left:698.9px;top:173.2px;width:33.9px;height:11.6px;background:#3b3b3b;border-top:.6px solid #474747;box-sizing:border-box;"></div>
<div class="t" style="top:175.02px;font-size:7.5px;line-height:9.8px;color:#f0f0f0;-webkit-text-stroke:.2px;left:701.5px;">-36,43</div>
<div style="left:736.8px;top:173.2px;width:34.2px;height:11.6px;background:#3b3b3b;border-top:.6px solid #474747;box-sizing:border-box;"></div>
<div class="t" style="top:175.02px;font-size:7.5px;line-height:9.8px;color:#f0f0f0;-webkit-text-stroke:.2px;left:739.4px;">-41,56</div>
<div class="t" style="top:189.03px;font-size:7.3px;line-height:9.5px;color:#dedede;-webkit-text-stroke:.2px;right:173.8px;">Rotation:</div>
<div style="left:698.9px;top:187.3px;width:33.9px;height:11.6px;background:#3b3b3b;border-top:.6px solid #474747;box-sizing:border-box;"></div>
<div class="t" style="top:189.03px;font-size:7.5px;line-height:9.8px;color:#f0f0f0;-webkit-text-stroke:.2px;left:701.5px;">0,00</div>
<div class="t" style="top:203.02px;font-size:7.3px;line-height:9.5px;color:#dedede;-webkit-text-stroke:.2px;right:173.8px;">Scale:</div>
<div style="left:698.9px;top:201.5px;width:33.9px;height:11.6px;background:#3b3b3b;border-top:.6px solid #474747;box-sizing:border-box;"></div>
<div class="t" style="top:203.03px;font-size:7.5px;line-height:9.8px;color:#f0f0f0;-webkit-text-stroke:.2px;left:701.5px;">1,515</div>
<div style="left:736.8px;top:201.5px;width:34.2px;height:11.6px;background:#3b3b3b;border-top:.6px solid #474747;box-sizing:border-box;"></div>
<div class="t" style="top:203.03px;font-size:7.5px;line-height:9.8px;color:#f0f0f0;-webkit-text-stroke:.2px;left:739.4px;">1,515</div>
<div class="t" style="top:217.03px;font-size:7.3px;line-height:9.5px;color:#dedede;-webkit-text-stroke:.2px;right:173.8px;">Skew:</div>
<div style="left:698.9px;top:215.6px;width:33.9px;height:11.6px;background:#3b3b3b;border-top:.6px solid #474747;box-sizing:border-box;"></div>
<div class="t" style="top:217.03px;font-size:7.5px;line-height:9.8px;color:#f0f0f0;-webkit-text-stroke:.2px;left:701.5px;">0,00</div>
<div style="left:736.8px;top:215.6px;width:34.2px;height:11.6px;background:#3b3b3b;border-top:.6px solid #474747;box-sizing:border-box;"></div>
<div class="t" style="top:217.03px;font-size:7.5px;line-height:9.8px;color:#f0f0f0;-webkit-text-stroke:.2px;left:739.4px;">0,00</div>
<svg style="left:775px;top:173px;" width="13" height="12" viewBox="775 173 13 12"><rect x="776.300" y="174.300" width="9.800" height="9.000" rx="1.200" fill="none" stroke="#8a8a8a" stroke-width=".8" stroke-dasharray="1.600 1.000"/><path d="M781.200 176.300l2.500 2.500-2.500 2.500-2.500-2.500z" fill="none" stroke="#ddd" stroke-width=".8"/><circle cx="781.200" cy="178.800" r=".7" fill="#ddd"/></svg>
<div style="left:737.2px;top:187.6px;width:13.0px;height:11.0px;background:#6a6a6a;border-radius:2px;"></div>
<svg style="left:738px;top:188px;" width="12" height="10" viewBox="738 188 12 10"><path d="M741.000 190.600l5.200 5.200M741.000 193.600a3.000 3.000 0 0 1 5.300-1.600" stroke="#e0e0e0" stroke-width=".9" fill="none"/></svg>
<svg style="left:776px;top:201px;" width="10" height="12" viewBox="776 201 10 12"><rect x="778.000" y="206.400" width="5.000" height="4.200" rx=".6" fill="#f0f0f0"/><path d="M779.000 206.400v-1.500a1.500 1.500 0 0 1 3.000 0v1.500" fill="none" stroke="#f0f0f0" stroke-width=".9"/></svg>
<svg style="left:665px;top:235.7px" width="7" height="8" viewBox="0 0 7 8"><path d="M1.300 2.300h4.200l-2.100 3.600z" fill="#9a9a9a"/></svg>
<div class="t" style="top:236.03px;font-size:7.1px;line-height:9.2px;color:#f0f0f0;font-weight:bold;left:674.0px;">Compositing</div>
<div class="t" style="top:250.03px;font-size:7.3px;line-height:9.5px;color:#dedede;-webkit-text-stroke:.2px;right:173.8px;">Opacity:</div>
<div style="left:698.9px;top:248.6px;width:29.1px;height:11.6px;background:#3b3b3b;border-top:.6px solid #474747;box-sizing:border-box;"></div>
<div class="t" style="top:250.03px;font-size:7.5px;line-height:9.8px;color:#f0f0f0;-webkit-text-stroke:.2px;left:701.5px;">100%</div>
<div class="t" style="top:264.03px;font-size:7.3px;line-height:9.5px;color:#dedede;-webkit-text-stroke:.2px;right:173.8px;">Blending:</div>
<div style="left:699.6px;top:263.7px;width:57.2px;height:9.2px;background:#5c5c5c;border-radius:2.500px;"></div>
<div style="left:748.2px;top:263.7px;width:8.6px;height:9.2px;background:#3474c4;border-radius:0 2.500px 2.500px 0;box-shadow:0 0 2px 1.200px rgba(30,75,140,.85);"></div>
<svg style="left:748px;top:263px;" width="9" height="11" viewBox="748 263 9 11"><path d="M751.100 267.300l1.400-1.500 1.400 1.500M751.100 269.300l1.400 1.500 1.400-1.500" fill="none" stroke="#fff" stroke-width=".9"/></svg>
<div class="t" style="top:264.02px;font-size:7.0px;line-height:9.1px;color:#f4f4f4;-webkit-text-stroke:.2px;left:704.0px;">Normal</div>
<div style="left:766.6px;top:265.5px;width:6.0px;height:6.0px;background:#5c5c5c;border-radius:1.500px;"></div>
<div class="t" style="top:264.03px;font-size:7.2px;line-height:9.4px;color:#dedede;-webkit-text-stroke:.2px;left:776.6px;">Isolate</div>
<svg style="left:665px;top:282.0px" width="7" height="8" viewBox="0 0 7 8"><path d="M1.300 2.300h4.200l-2.100 3.600z" fill="#9a9a9a"/></svg>
<div class="t" style="top:283.03px;font-size:7.1px;line-height:9.2px;color:#f0f0f0;font-weight:bold;left:674.0px;">Group</div>
<div style="left:675.6px;top:295.5px;width:6.0px;height:6.0px;background:#5c5c5c;border-radius:1.500px;"></div>
<div class="t" style="top:294.03px;font-size:7.05px;line-height:9.2px;color:#dedede;-webkit-text-stroke:.2px;left:685.4px;">Use as a layer</div>
<div style="left:675.6px;top:305.1px;width:6.0px;height:6.0px;background:#5c5c5c;border-radius:1.500px;"></div>
<div class="t" style="top:304.02px;font-size:7.05px;line-height:9.2px;color:#dedede;-webkit-text-stroke:.2px;left:685.4px;">Enable hyperlink</div>
<svg style="left:665px;top:320.8px" width="7" height="8" viewBox="0 0 7 8"><path d="M1.300 2.300h4.200l-2.100 3.600z" fill="#9a9a9a"/></svg>
<div class="t" style="top:321.03px;font-size:7.1px;line-height:9.2px;color:#f0f0f0;font-weight:bold;left:674.0px;">Filters: none</div>
<svg style="left:760px;top:320px;" width="50" height="10" viewBox="760 320 50 10"><path d="M763.300 326.500h4.200l-2.100-3.400z" fill="#5a5a5a"/><path d="M776.300 323.300h4.200l-2.100 3.400z" fill="#5a5a5a"/><path d="M789.000 324.900h4.600" stroke="#5a5a5a" stroke-width="1.100"/><path d="M801.300 324.900h5.400M804.000 322.200v5.400" stroke="#f4f4f4" stroke-width="1.300"/></svg>
<div style="left:660.4px;top:356.3px;width:166.4px;height:19.9px;background:#3a3a3a;"></div>
<div style="left:660.4px;top:355.9px;width:166.4px;height:1.4px;background:#2a2a2a;"></div>
<div style="left:660.0px;top:370.2px;width:0.8px;height:108.3px;background:#262626;"></div>
<div style="left:753.3px;top:357.3px;width:20.0px;height:18.9px;background:#525252;"></div>
<svg style="left:715px;top:359px;" width="57" height="14" viewBox="715 359 57 14"><g fill="#7d7d7d"><rect x="719.600" y="362.200" width="5.200" height="1.800"/><rect x="721.600" y="365.000" width="5.600" height="1.800"/><rect x="721.600" y="367.800" width="5.600" height="1.800"/></g>
<rect x="739.000" y="362.600" width="7.600" height="6.200" rx=".8" fill="none" stroke="#cfcfcf" stroke-width=".9"/><path d="M740.000 368.000l2.000-2.500 1.400 1.300 1.200-1.000 1.400 2.200z" fill="#cfcfcf"/><path d="M747.600 364.000v6.000h-7.000" fill="none" stroke="#cfcfcf" stroke-width=".8"/>
<g stroke="#f0f0f0" stroke-width=".9"><path d="M762.900 363.000v6.000M760.300 364.500l5.200 3.000M760.300 367.500l5.200-3.000"/></g></svg>
<div style="left:660.4px;top:376.2px;width:166.4px;height:98.0px;background:#212121;"></div>
<div style="left:660.4px;top:474.0px;width:166.4px;height:14.6px;background:#2a2a2a;border-radius:0 0 4px 0;border-top:.7px solid #3a3a3a;box-sizing:border-box;"></div>
<svg style="left:672px;top:382px;" width="30" height="34" viewBox="672 382 30 34"><path d="M686.400 383.800l13.400 7.200-13.400 7.400-13.400-7.400z" fill="#e0e0e0"/><path d="M673.000 391.000l13.400 7.400v16.200l-13.400-7.600z" fill="#c2c2c2"/><path d="M699.800 391.000l-13.400 7.400v16.200l13.400-7.600z" fill="#d3d3d3"/></svg>
<div class="t" style="top:415.03px;font-size:7.2px;line-height:9.4px;color:#e0e0e0;-webkit-text-stroke:.2px;left:588.2px;width:200px;text-align:center;">grey-cu...</div>
<svg style="left:666px;top:478px;" width="42" height="10" viewBox="666 478 42 10"><g fill="#e0e0e0"><rect x="667.200" y="479.600" width="2.400" height="2.400"/><rect x="670.400" y="479.600" width="2.400" height="2.400"/><rect x="673.600" y="479.600" width="2.400" height="2.400"/><rect x="667.200" y="482.800" width="2.400" height="2.400"/><rect x="670.400" y="482.800" width="2.400" height="2.400"/><rect x="673.600" y="482.800" width="2.400" height="2.400"/></g>
<path d="M684.200 482.800h6.400M687.400 479.600v6.400" stroke="#e0e0e0" stroke-width=".9"/>
<path d="M698.300 480.600h5.600M699.000 481.200l.4 5.200h3.400l.4-5.200M700.200 480.600v-.9h1.800v.9" fill="none" stroke="#555" stroke-width=".8"/></svg>
<div style="left:63.0px;top:370.2px;width:597.4px;height:108.3px;background:#363636;"></div>
<div style="left:63.0px;top:370.2px;width:597.4px;height:0.8px;background:#262626;"></div>
<div style="left:76.2px;top:375.7px;width:59.5px;height:11.9px;background:#646464;border-radius:2.500px;"></div>
<div style="left:76.2px;top:375.7px;width:20.4px;height:11.9px;background:#a4a4a4;border-radius:2.500px 0 0 2.500px;"></div>
<svg style="left:76px;top:375px;" width="60" height="13" viewBox="76 375 60 13"><path d="M96.800 376.500v10.500M116.300 376.500v10.500" stroke="#444" stroke-width=".6"/>
<path d="M84.400 379.200l-2.600 2.400 2.600 2.400M88.400 379.200l2.600 2.400-2.600 2.400" fill="none" stroke="#3c3c3c" stroke-width=".9"/><path d="M86.400 379.000l2.400 2.600-2.400 2.600-2.400-2.600z" fill="none" stroke="#3c3c3c" stroke-width=".9"/>
<rect x="102.600" y="377.800" width="7.600" height="7.600" rx=".8" fill="none" stroke="#d8d8d8" stroke-width=".9"/><path d="M103.600 384.400q1.000-4.500 5.600-5.600" fill="none" stroke="#d8d8d8" stroke-width=".8"/>
<rect x="122.000" y="377.800" width="7.600" height="7.600" rx=".8" fill="none" stroke="#b0b0b0" stroke-width=".9" stroke-dasharray="1.400 .8"/><path d="M124.000 383.400l2.000-3.000 2.000 3.000z" fill="none" stroke="#b0b0b0" stroke-width=".7"/></svg>
<div style="left:345.3px;top:375.3px;width:62.5px;height:12.7px;background:#3b3b3b;border-radius:2px;border-top:.6px solid #4a4a4a;box-sizing:border-box;"></div>
<div class="t" style="top:377.03px;font-size:8.4px;line-height:10.9px;color:#e8e8e8;-webkit-text-stroke:.2px;left:276.7px;width:200px;text-align:center;">00:02.900</div>
<div style="left:414.2px;top:375.3px;width:19.7px;height:12.7px;background:#626262;border-radius:2.500px;"></div>
<div style="left:421.1px;top:378.7px;width:6.0px;height:6.0px;background:#f4f4f4;border-radius:50%;"></div>
<div style="left:440.0px;top:375.3px;width:19.4px;height:12.7px;background:#626262;border-radius:2.500px;"></div>
<svg style="left:444px;top:376px;" width="12" height="12" viewBox="444 376 12 12"><path d="M448.000 380.200h-1.800v5.000h7.000v-5.000h-1.800" fill="none" stroke="#e8e8e8" stroke-width=".9"/><path d="M449.700 383.000v-4.800M448.300 379.500l1.400-1.500 1.400 1.500" fill="none" stroke="#e8e8e8" stroke-width=".9"/></svg>
<div style="left:63.0px;top:391.3px;width:597.4px;height:17.7px;background:#323232;"></div>
<div style="left:63.0px;top:390.8px;width:597.4px;height:0.9px;background:#262626;"></div>
<div style="left:63.0px;top:409.0px;width:597.4px;height:69.5px;background:#1e1e1e;"></div>
<div style="left:63.0px;top:408.4px;width:588.0px;height:0.8px;background:#666;"></div>
<div style="left:651.0px;top:391.7px;width:9.0px;height:86.8px;background:#323232;"></div>
<div style="left:63.0px;top:442.7px;width:177.0px;height:10.6px;background:#474747;"></div>
<div class="t" style="top:411.03px;font-size:6.75px;line-height:8.8px;color:#ececec;font-weight:bold;left:78.7px;">everything</div>
<div class="t" style="top:423.03px;font-size:5.5px;line-height:7.2px;color:#e0e0e0;font-weight:bold;left:97.8px;">Scale</div>
<div class="t" style="top:433.03px;font-size:6.75px;line-height:8.8px;color:#ececec;font-weight:bold;left:78.7px;">smiley</div>
<div class="t" style="top:445.03px;font-size:5.5px;line-height:7.2px;color:#e0e0e0;font-weight:bold;left:97.8px;">Scale</div>
<div class="t" style="top:456.03px;font-size:6.75px;line-height:8.8px;color:#ececec;font-weight:bold;left:78.7px;">(grey-cube)</div>
<div class="t" style="top:467.02px;font-size:5.5px;line-height:7.2px;color:#e0e0e0;font-weight:bold;left:97.8px;">Scale</div>
<svg style="left:63px;top:392px;" width="177" height="87" viewBox="63 392 177 87"><rect x="67.200" y="411.1" width="7.600" height="7.400" fill="none" stroke="#bdbdbd" stroke-width=".9"/><path d="M68.800 412.8h2.200v2.000h-2.200zM71.800 413.2h1.800M68.800 416.6h4.600" fill="none" stroke="#bdbdbd" stroke-width=".7"/><path d="M174.000 422.7l3.100 3.100-3.100 3.100-3.100-3.100z" fill="none" stroke="#cfcfcf" stroke-width=".8"/><rect x="67.200" y="433.3" width="7.600" height="7.400" fill="none" stroke="#bdbdbd" stroke-width=".9"/><path d="M68.800 434.8h2.400v2.400h-2.400zM71.000 437.0h2.400v2.400h-2.400z" fill="none" stroke="#bdbdbd" stroke-width=".7"/><path d="M174.000 444.9l3.100 3.100-3.100 3.100-3.100-3.100z" fill="none" stroke="#cfcfcf" stroke-width=".8"/><path d="M168.800 445.9l-2.100 2.100 2.100 2.100" fill="none" stroke="#cfcfcf" stroke-width=".8"/><rect x="67.200" y="455.4" width="7.600" height="7.400" fill="none" stroke="#bdbdbd" stroke-width=".9"/><path d="M69.400 459.1h3.200M71.000 457.5v3.200" fill="none" stroke="#bdbdbd" stroke-width=".7"/><path d="M174.000 467.0l3.100 3.100-3.100 3.100-3.100-3.100z" fill="none" stroke="#cfcfcf" stroke-width=".8"/><path d="M168.800 468.0l-2.100 2.100 2.100 2.100" fill="none" stroke="#cfcfcf" stroke-width=".8"/><path d="M174.000 400.200l3.000 3.000-3.000 3.000-3.000-3.000z" fill="none" stroke="#9a9a9a" stroke-width=".8"/><circle cx="174.000" cy="403.200" r="1.000" fill="#9a9a9a"/><rect x="67.200" y="477.000" width="7.600" height="3" fill="none" stroke="#777" stroke-width=".9"/></svg>
<svg style="left:240px;top:392px;" width="420" height="87" viewBox="240 392 420 87"><path d="M320.76 406.600v2.200M328.51 406.600v2.200M336.25 406.600v2.200M344.00 405.200v3.600M351.75 406.600v2.200M359.49 406.600v2.200M367.24 406.600v2.200M374.98 406.600v2.200M382.73 404.500v4.300M390.47 406.600v2.200M398.22 406.600v2.200M405.96 406.600v2.200M413.70 406.600v2.200M421.45 405.200v3.600M429.19 406.600v2.200M436.94 406.600v2.200M444.69 406.600v2.200M452.43 406.600v2.200M460.18 404.500v4.300M467.92 406.600v2.200M475.67 406.600v2.200M483.41 406.600v2.200M491.15 406.600v2.200M498.90 405.200v3.600M506.64 406.600v2.200M514.39 406.600v2.200M522.13 406.600v2.200M529.88 406.600v2.200M537.62 404.500v4.300M545.37 406.600v2.200M553.12 406.600v2.200M560.86 406.600v2.200M568.61 406.600v2.200M576.35 405.200v3.600M584.10 406.600v2.200M591.84 406.600v2.200M599.59 406.600v2.200M607.33 406.600v2.200M615.08 404.500v4.300M622.82 406.600v2.200M630.57 406.600v2.200M638.31 406.600v2.200M646.06 406.600v2.200" stroke="#a8a8a8" stroke-width=".8" fill="none"/>
<path d="M344.00 409.500v69M421.45 409.500v69M498.90 409.500v69M576.35 409.500v69M653.80 409.500v69" stroke="#343434" stroke-width=".8" stroke-dasharray="1.500 1.500" fill="none"/>
<path d="M240 430.600h411M240 453.400h411M240 475.600h411" stroke="#333" stroke-width=".8" stroke-dasharray="1.500 1.500" fill="none"/>
<rect x="520.500" y="422.900" width="39.400" height="5.500" fill="#474747"/>
<path d="M520.800 422.700l2.900 2.900-2.900 2.900-2.900-2.900zM559.700 422.700l2.900 2.900-2.900 2.900-2.900-2.900z" fill="#f0f0f0"/>
<rect x="385.800" y="443.800" width="39.800" height="8.400" rx="4.200" fill="#12294d" opacity=".8"/>
<rect x="386.800" y="444.700" width="37.800" height="6.600" rx="3.300" fill="#1f467f"/>
<path d="M391.000 444.600l3.400 3.400-3.400 3.400-3.400-3.400zM420.800 444.600l3.400 3.400-3.400 3.400-3.400-3.400z" fill="#3f7fc8"/>
<path d="M396.300 446.000l2.000 2.000-2.000 2.000" fill="none" stroke="#3f7fc8" stroke-width="1.000"/>
<path d="M414.000 445.200l2.800 2.800-2.800 2.800-2.000-2.800z" fill="#3f7fc8"/>
<path d="M413.300 406.000v72.500" stroke="#989898" stroke-width="1.400"/>
<path d="M409.600 405.000h7.400l-3.700 3.900z" fill="#f4f4f4"/>
<rect x="653.600" y="394.400" width="4.400" height="25.000" rx="2.200" fill="#7c7c7c"/>
</svg>
<div class="t" style="top:397.02px;font-size:6.65px;line-height:8.6px;color:#dcdcdc;-webkit-text-stroke:.2px;left:244.2px;width:200px;text-align:center;">00:02</div>
<div class="t" style="top:397.02px;font-size:6.65px;line-height:8.6px;color:#dcdcdc;-webkit-text-stroke:.2px;left:321.6px;width:200px;text-align:center;">00:03</div>
<div class="t" style="top:397.02px;font-size:6.65px;line-height:8.6px;color:#dcdcdc;-webkit-text-stroke:.2px;left:399.1px;width:200px;text-align:center;">00:04</div>
<div class="t" style="top:397.02px;font-size:6.65px;line-height:8.6px;color:#dcdcdc;-webkit-text-stroke:.2px;left:476.6px;width:200px;text-align:center;">00:05</div>
<div style="left:640px;top:395px;width:11.300px;height:13px;overflow:hidden;"><div class="u" style="left:4.200px;top:1.900px;font-size:6.650px;line-height:9px;color:#dcdcdc;">00:06</div></div>
<div class="t" style="top:423.02px;font-size:5.7px;line-height:7.4px;color:#e8e8e8;font-weight:bold;left:439.8px;width:200px;text-align:center;">Bezier</div>
<div class="t" style="top:445.03px;font-size:5.0px;line-height:6.5px;color:#c4dcf4;font-weight:bold;left:305.0px;width:200px;text-align:center;">Pop</div>
<div style="left:653.6px;top:394.4px;width:4.4px;height:25.0px;background:#7c7c7c;border-radius:2.200px;"></div>
<div style="left:63.0px;top:478.5px;width:597.4px;height:10.1px;background:#333333;"></div>
<div style="left:63.0px;top:478.1px;width:597.4px;height:0.7px;background:#262626;"></div>
<svg style="left:100px;top:479px;" width="560" height="9" viewBox="100 479 560 9"><circle cx="115.300" cy="483.700" r="2.600" fill="none" stroke="#c4c4c4" stroke-width=".8"/><path d="M113.800 483.700h3.000" stroke="#c4c4c4" stroke-width=".8"/>
<path d="M122.000 483.700h50.000" stroke="#555" stroke-width="1.400" stroke-linecap="round"/><path d="M122.000 483.700h18.000" stroke="#2f66b0" stroke-width="1.600" stroke-linecap="round"/>
<circle cx="140.000" cy="483.600" r="2.900" fill="#f2f2f2"/>
<circle cx="178.000" cy="483.700" r="2.600" fill="none" stroke="#c4c4c4" stroke-width=".8"/><path d="M176.500 483.700h3.000M178.000 482.200v3.000" stroke="#c4c4c4" stroke-width=".8"/>
<path d="M190.7 486.600v-3.000q.4-2.400 3.000-2.600" fill="none" stroke="#dcdcdc" stroke-width=".9"/><circle cx="194.5" cy="481.000" r="1.100" fill="none" stroke="#dcdcdc" stroke-width=".8"/><path d="M201.1 486.400l3.400-3.600" fill="none" stroke="#dcdcdc" stroke-width=".9"/><circle cx="205.1" cy="481.600" r="1.300" fill="none" stroke="#dcdcdc" stroke-width=".8"/><path d="M212.2 486.600v-3.000q.4-2.400 3.000-2.600" fill="none" stroke="#dcdcdc" stroke-width=".9"/><circle cx="216.0" cy="481.000" r="1.100" fill="none" stroke="#dcdcdc" stroke-width=".8"/><path d="M227.4 486.600v-3.000q-.4-2.400-3.000-2.600" fill="none" stroke="#dcdcdc" stroke-width=".9"/><circle cx="223.6" cy="481.000" r="1.100" fill="none" stroke="#dcdcdc" stroke-width=".8"/><path d="M233.5 486.400l3.400-3.600" fill="none" stroke="#dcdcdc" stroke-width=".9"/><circle cx="237.5" cy="481.600" r="1.300" fill="none" stroke="#dcdcdc" stroke-width=".8"/><path d="M249.4 486.600v-3.000q-.4-2.400-3.000-2.600" fill="none" stroke="#dcdcdc" stroke-width=".9"/><circle cx="245.6" cy="481.000" r="1.100" fill="none" stroke="#dcdcdc" stroke-width=".8"/><rect x="254.800" y="480.200" width="6.600" height="6.600" rx="1.000" fill="none" stroke="#f4f4f4" stroke-width=".9"/><path d="M255.800 484.800q1.400-3.600 2.400-1.400t2.400-1.400" fill="none" stroke="#f4f4f4" stroke-width=".7"/><circle cx="269.200" cy="483.600" r="2.300" fill="none" stroke="#f0f0f0" stroke-width="1.700" stroke-dasharray="1.200 .9"/><circle cx="269.200" cy="483.600" r="1.500" fill="none" stroke="#f0f0f0" stroke-width=".9"/><rect x="286.400" y="482.100" width="159.000" height="4.600" rx="2.300" fill="#6c6c6c"/></svg>
<svg style="left:250px;top:469px;" width="17" height="10" viewBox="250 469 17 10"><path d="M251.500 469.500h13.400l-6.700 8.000z" fill="#323232" stroke="#4c4c4c" stroke-width=".7"/><path d="M251.000 469.000h14.400v1.000h-14.400z" fill="#323232"/></svg>
<div style="left:177.2px;top:287.2px;width:162.1px;height:182.8px;background:#323232;border-radius:4px;box-shadow:0 0 0 .7px #555,0 2px 6px rgba(0,0,0,.45);overflow:hidden;">
<div style="left:0.0px;top:0.0px;width:75.0px;height:146.3px;background:#1f1f1f;"></div>
<div style="left:66.2px;top:0.0px;width:8.8px;height:130.3px;background:#2a2a2a;"></div>
<div style="left:0.0px;top:130.3px;width:75.0px;height:1.3px;background:#2c2c2c;"></div>
<div style="left:76.8px;top:0.0px;width:85.3px;height:146.3px;background:#232323;"></div>
<div style="left:0.0px;top:58.2px;width:66.2px;height:11.3px;background:#464646;"></div>
</div>
<div class="t" style="top:289.03px;font-size:7.6px;line-height:9.9px;color:#f2f2f2;-webkit-text-stroke:.2px;left:179.0px;">Linear</div>
<div class="t" style="top:301.03px;font-size:7.6px;line-height:9.9px;color:#f2f2f2;-webkit-text-stroke:.2px;left:179.0px;">Ease In</div>
<div class="t" style="top:312.03px;font-size:7.6px;line-height:9.9px;color:#f2f2f2;-webkit-text-stroke:.2px;left:179.0px;">Ease Out</div>
<div class="t" style="top:324.03px;font-size:7.6px;line-height:9.9px;color:#f2f2f2;-webkit-text-stroke:.2px;left:179.0px;">Ease In Out</div>
<div class="t" style="top:335.03px;font-size:7.6px;line-height:9.9px;color:#f2f2f2;-webkit-text-stroke:.2px;left:179.0px;">Cubic Bezier</div>
<div class="t" style="top:347.02px;font-size:7.6px;line-height:9.9px;color:#f2f2f2;-webkit-text-stroke:.2px;left:179.0px;">Pop</div>
<svg style="left:177px;top:287px;overflow:hidden" width="162" height="147" viewBox="177 287 162 147"><g stroke="#565656" stroke-width=".7" fill="none"><rect x="258.700" y="323.900" width="74.200" height="73.100"/>
<path d="M277.250 323.900v73.100M295.800 323.900v73.100M314.350 323.900v73.100M258.700 342.180h74.200M258.700 360.450h74.200M258.700 378.730h74.200"/>
<path d="M258.700 397.000L332.900 323.900"/></g>
<path d="M258.700 397.000L266.500 329.500M332.900 323.900L303.500 286.400" stroke="#8a8a8a" stroke-width=".8" fill="none"/>
<path d="M258.700 397.000C266.500 329.000 281.300 258.100 332.900 323.900" stroke="#3d87d6" stroke-width="1.300" fill="none"/>
<circle cx="266.600" cy="329.500" r="1.800" fill="#232323" stroke="#d8d8d8" stroke-width=".8"/>
<circle cx="281.500" cy="288.600" r="1.800" fill="#232323" stroke="#8c8c8c" stroke-width=".8"/>
<path d="M182.000 427.100h5.600M184.800 424.300v5.600" stroke="#c8c8c8" stroke-width=".9"/><path d="M197.800 427.100h5.400" stroke="#8a8a8a" stroke-width=".9"/>
<circle cx="239.600" cy="427.000" r="2.900" fill="none" stroke="#e4e4e4" stroke-width="2.000" stroke-dasharray="1.400 .88"/><circle cx="239.600" cy="427.000" r="2.100" fill="none" stroke="#e4e4e4" stroke-width="1.200"/>
<path d="M246.700 426.200l1.700 1.700 1.700-1.700" fill="none" stroke="#c8c8c8" stroke-width=".9"/>
</svg>
<div class="t" style="top:441.03px;font-size:6.8px;line-height:8.8px;color:#ececec;-webkit-text-stroke:.2px;right:656.8px;">Name:</div>
<div style="left:214.3px;top:436.3px;width:77.9px;height:16.7px;background:#2a2a2a;border-radius:3.500px;border:2.600px solid #2a6a9c;box-sizing:border-box;"></div>
<div style="left:218.4px;top:440.4px;width:12.4px;height:8.4px;background:#46668c;"></div>
<div class="t" style="top:441.02px;font-size:7.1px;line-height:9.2px;color:#fff;-webkit-text-stroke:.2px;left:219.0px;">Pop</div>
<div style="left:293.6px;top:440.8px;width:34.8px;height:8.6px;background:#353535;border-radius:2.500px;border:.7px solid #666;box-sizing:border-box;"></div>
<div class="t" style="top:441.03px;font-size:7.0px;line-height:9.1px;color:#f2f2f2;-webkit-text-stroke:.2px;left:210.8px;width:200px;text-align:center;">Done</div>
<div class="t" style="top:455.02px;font-size:6.9px;line-height:9.0px;color:#ececec;-webkit-text-stroke:.2px;right:656.8px;">Function:</div>
<div style="left:216.0px;top:453.6px;width:116.9px;height:11.3px;background:#3b3b3b;border-top:.6px solid #484848;box-sizing:border-box;"></div>
<div class="t" style="top:455.02px;font-size:7.2px;line-height:9.4px;color:#ececec;-webkit-text-stroke:.2px;left:218.9px;">bezier(0.105, 0.93, 0.305, 1.9)</div>
<div style="left:820.0px;top:434.2px;width:10.2px;height:40.0px;background:rgba(24,24,24,.82);"></div>
<div class="u" style="left:760.000px;top:447.500px;font-size:21.300px;line-height:24px;color:#c9c9c9;text-shadow:.8px .8px 0 #5a5a5a,-.5px -.5px 0 #ededed;transform-origin:0 50%;transform:scaleX(.944);">Yuucn.com</div>
</body></html>
